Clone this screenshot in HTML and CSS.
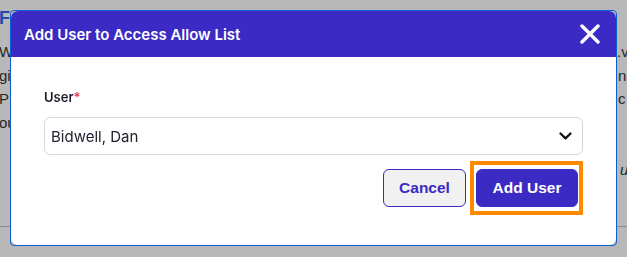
FILE: index.html
```html
<!DOCTYPE html>
<html lang="en">
<head>
<meta charset="utf-8">
<title>Add User to Access Allow List</title>
<link rel="stylesheet" href="styles.css">
</head>
<body>
<div class="page">
  <h2 class="bg-title">Feature Access</h2>
  <div class="bg-lines">
    <div class="bg-line"><span class="l">We</span><span class="r">.v</span></div>
    <div class="bg-line"><span class="l">gi</span><span class="r r2">n</span></div>
    <div class="bg-line"><span class="l">P|</span><span class="r r2">c</span></div>
    <div class="bg-line"><span class="l">ou</span><span class="r"></span></div>
    <div class="bg-line"><span class="l"></span><span class="r"></span></div>
    <div class="bg-line"><span class="l"></span><span class="r r2 it">u</span></div>
  </div>
  <hr class="bg-rule">
</div>

<div class="overlay">
  <div class="modal-frame">
    <div class="modal" role="dialog" aria-labelledby="dlg-title">
      <div class="modal-header">
        <h2 class="modal-title" id="dlg-title">Add User to Access Allow List</h2>
        <button class="close-btn" aria-label="Close">
          <svg width="20" height="20" viewBox="0 0 20 20"><path d="M2 2 L18 18 M18 2 L2 18" stroke="#fff" stroke-width="3.4" stroke-linecap="round" fill="none"/></svg>
        </button>
      </div>
      <div class="modal-body">
        <label class="field-label">User<span class="required">*</span></label>
        <div class="select">
          <span>Bidwell, Dan</span>
          <svg width="13" height="8" viewBox="0 0 13 8"><path d="M1.5 1.5 L6.5 6.3 L11.5 1.5" stroke="#111" stroke-width="2.3" stroke-linecap="round" stroke-linejoin="round" fill="none"/></svg>
        </div>
        <div class="actions">
          <button class="btn btn-secondary">Cancel</button>
          <button class="btn btn-primary">Add User</button>
        </div>
      </div>
    </div>
  </div>
</div>
</body>
</html>
```
FILE: styles.css
```css
* { box-sizing: border-box; }

html, body {
  margin: 0;
  height: 257px;
  overflow: hidden;
}

body {
  background: #b8b8b8;
  font-family: "Liberation Sans", Arial, sans-serif;
}

.page {
  color: #262626;
  font-size: 15px;
  margin-left: -1px;
}

.bg-title {
  margin: 0;
  padding-top: 6px;
  font-size: 18px;
  line-height: 24px;
  font-weight: 600;
  color: #2447b0;
}

.bg-lines {
  margin-top: 10px;
}

.bg-line {
  display: flex;
  justify-content: space-between;
  height: 23.5px;
  line-height: 23.5px;
  white-space: nowrap;
}

.bg-line .r {
  width: 10px;
}

.bg-line .r2 {
  padding-left: 1px;
}

.bg-line .it {
  font-style: italic;
  padding-left: 3px;
}

.bg-rule {
  border: 0;
  border-top: 1px solid #8c8c8c;
  margin: 45px 0 0;
}

.overlay {
  position: fixed;
  inset: 0;
  padding: 10px 10px 11px 10px;
  display: flex;
}

.modal-frame {
  flex: 1;
  display: flex;
  border: 1px solid #0a5fd8;
  border-radius: 4px;
}

.modal {
  flex: 1;
  display: flex;
  flex-direction: column;
  background: #fff;
  border-radius: 7px;
  overflow: hidden;
  font-family: Inter, "Liberation Sans", sans-serif;
}

.modal-header {
  height: 46px;
  flex: none;
  background: #3b2ac4;
  display: flex;
  align-items: center;
  justify-content: space-between;
  padding: 0 16px 0 13px;
}

.modal-title {
  margin: 0;
  color: #fff;
  font-size: 15px;
  font-weight: 600;
}

.close-btn {
  width: 20px;
  height: 20px;
  padding: 0;
  border: 0;
  background: none;
  display: flex;
}

.modal-body {
  padding: 32px 33px 0;
}

.field-label {
  display: block;
  font-size: 13px;
  font-weight: 600;
  line-height: 16px;
  color: #1f1d2b;
}

.required {
  color: #e5364f;
}

.select {
  margin-top: 12px;
  height: 38px;
  border: 1px solid #d6d6d6;
  border-radius: 6px;
  display: flex;
  align-items: center;
  justify-content: space-between;
  padding: 0 10px 0 6px;
  font-size: 15px;
  color: #24222f;
}

.actions {
  display: flex;
  justify-content: flex-end;
  gap: 10px;
  margin-top: 14px;
  padding-right: 5px;
}

.btn {
  height: 38px;
  border-radius: 6px;
  font-family: "Liberation Sans", Arial, sans-serif;
  font-weight: 700;
  font-size: 15.5px;
  padding: 0;
  cursor: pointer;
}

.btn-secondary {
  width: 83px;
  background: #f1f1f2;
  border: 1px solid #3b2ac4;
  color: #3b2ac4;
}

.btn-primary {
  width: 102px;
  position: relative;
  background: #3b2ac4;
  border: 1px solid #3b2ac4;
  color: #fff;
}

.btn-primary::after {
  content: "";
  position: absolute;
  top: -9px;
  bottom: -9px;
  left: -7px;
  right: -6px;
  border: 4px solid #ff8a00;
}
```
